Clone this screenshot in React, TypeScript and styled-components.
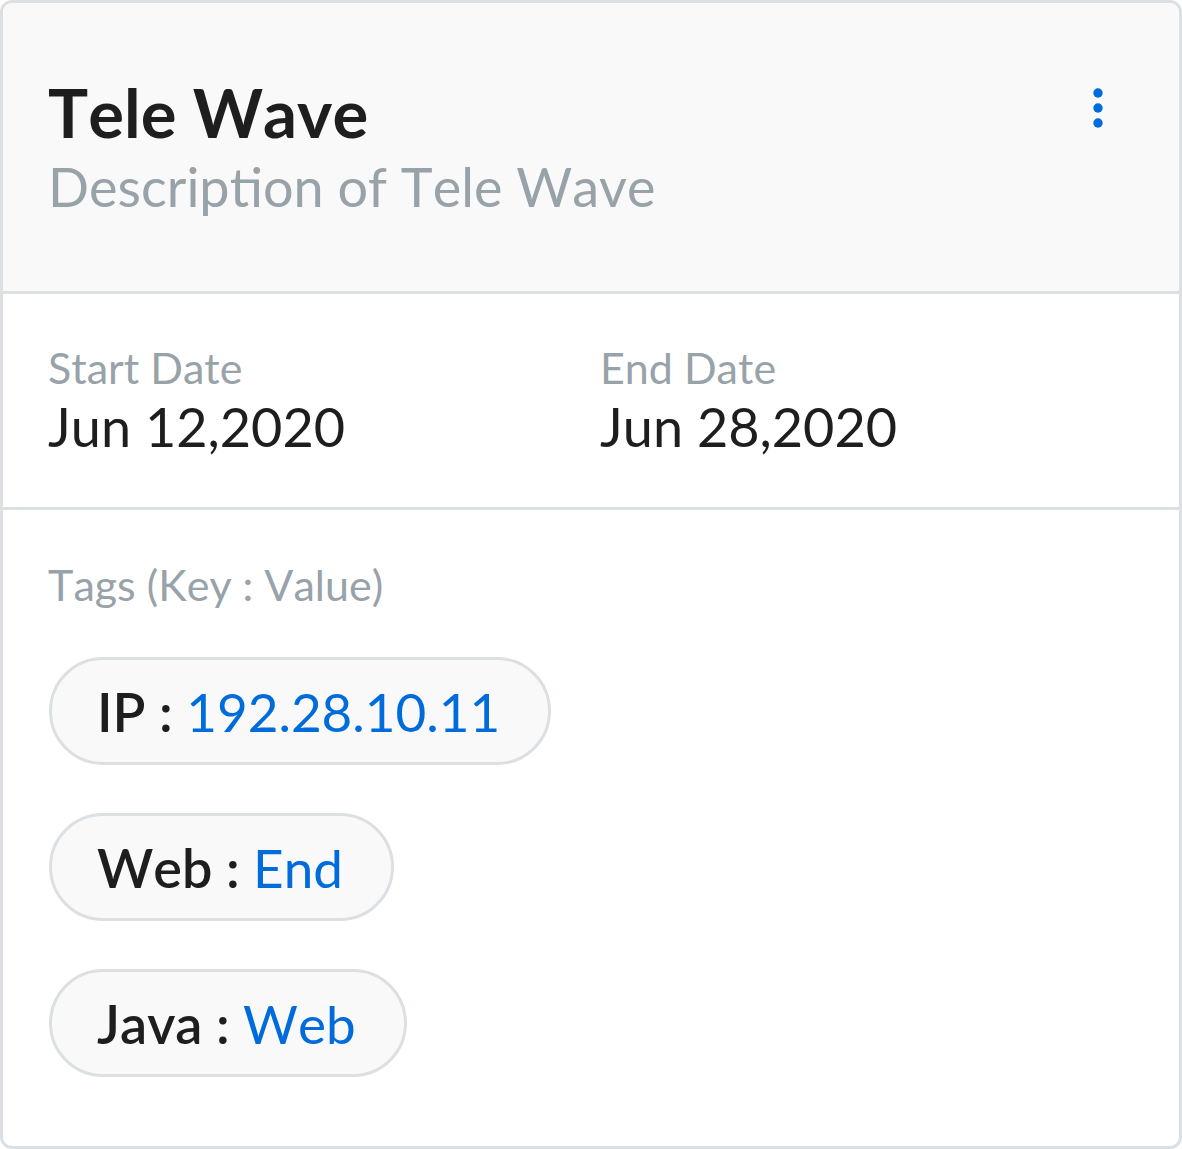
import React from "react";
import styled, { createGlobalStyle } from "styled-components";

const GlobalStyle = createGlobalStyle`
  * { box-sizing: border-box; }
  body {
    margin: 0;
    background: #ffffff;
    font-family: Lato, "Open Sans", sans-serif;
    font-kerning: none;
    color: #1e1e1e;
  }
`;

const Card = styled.article`
  border: 3px solid #dce0e3;
  border-radius: 12px;
  background: #ffffff;
  overflow: hidden;
`;

const Header = styled.header`
  display: flex;
  justify-content: space-between;
  align-items: flex-start;
  padding: 72px 45px;
  background: #f9f9f9;
  border-bottom: 3px solid #dce0e3;
`;

const Title = styled.h1`
  margin: 0 0 6px;
  font-size: 67px;
  font-weight: 700;
  line-height: 74px;
`;

const Description = styled.p`
  margin: 0;
  font-size: 54px;
  line-height: 64px;
  color: #98a2a9;
`;

const MenuButton = styled.button`
  display: flex;
  justify-content: center;
  width: 72px;
  padding: 12px 0;
  border: 0;
  background: transparent;
  color: #006cdb;
  cursor: pointer;
`;

const Dates = styled.dl`
  display: grid;
  grid-template-columns: 1fr 1fr;
  margin: 0;
  padding: 47px 27px 48px 45px;
  border-bottom: 3px solid #dce0e3;
`;

const Label = styled.dt`
  font-size: 43px;
  line-height: 54px;
  color: #98a2a9;
`;

const DateValue = styled.dd`
  margin: 0;
  font-size: 54px;
  line-height: 64px;
`;

const Tags = styled.section`
  padding: 48px 45px 69px;
`;

const TagsTitle = styled.h2`
  margin: 0 0 45px;
  font-size: 43px;
  font-weight: 400;
  line-height: 54px;
  color: #98a2a9;
`;

const TagList = styled.ul`
  display: flex;
  flex-direction: column;
  align-items: flex-start;
  gap: 48px;
  margin: 0;
  padding: 0 1px;
  list-style: none;
`;

const Tag = styled.li`
  padding: 18px 48px 16px 45px;
  border: 3px solid #dce0e3;
  border-radius: 54px;
  background: #f9f9f9;
  font-size: 54px;
  line-height: 68px;
`;

const TagKey = styled.span`
  font-weight: 600;
`;

const TagValue = styled.span`
  font-size: 53px;
  color: #006cdb;
`;

const dates = [
  { label: "Start Date", value: "Jun 12,2020" },
  { label: "End Date", value: "Jun 28,2020" },
];

const tags = [
  { name: "IP", value: "192.28.10.11" },
  { name: "Web", value: "End" },
  { name: "Java", value: "Web" },
];

export default function App() {
  return (
    <>
      <GlobalStyle />
      <Card>
        <Header>
          <div>
            <Title>Tele Wave</Title>
            <Description>Description of Tele Wave</Description>
          </div>
          <MenuButton type="button" aria-label="More options">
            <svg width="10" height="42" viewBox="0 0 10 42" fill="currentColor" aria-hidden="true">
              <circle cx="5" cy="6" r="4.7" />
              <circle cx="5" cy="21" r="4.7" />
              <circle cx="5" cy="36" r="4.7" />
            </svg>
          </MenuButton>
        </Header>
        <Dates>
          {dates.map((d) => (
            <div key={d.label}>
              <Label>{d.label}</Label>
              <DateValue>{d.value}</DateValue>
            </div>
          ))}
        </Dates>
        <Tags>
          <TagsTitle>Tags (Key : Value)</TagsTitle>
          <TagList>
            {tags.map((t) => (
              <Tag key={t.name}>
                <TagKey>{t.name} : </TagKey>
                <TagValue>{t.value}</TagValue>
              </Tag>
            ))}
          </TagList>
        </Tags>
      </Card>
    </>
  );
}
